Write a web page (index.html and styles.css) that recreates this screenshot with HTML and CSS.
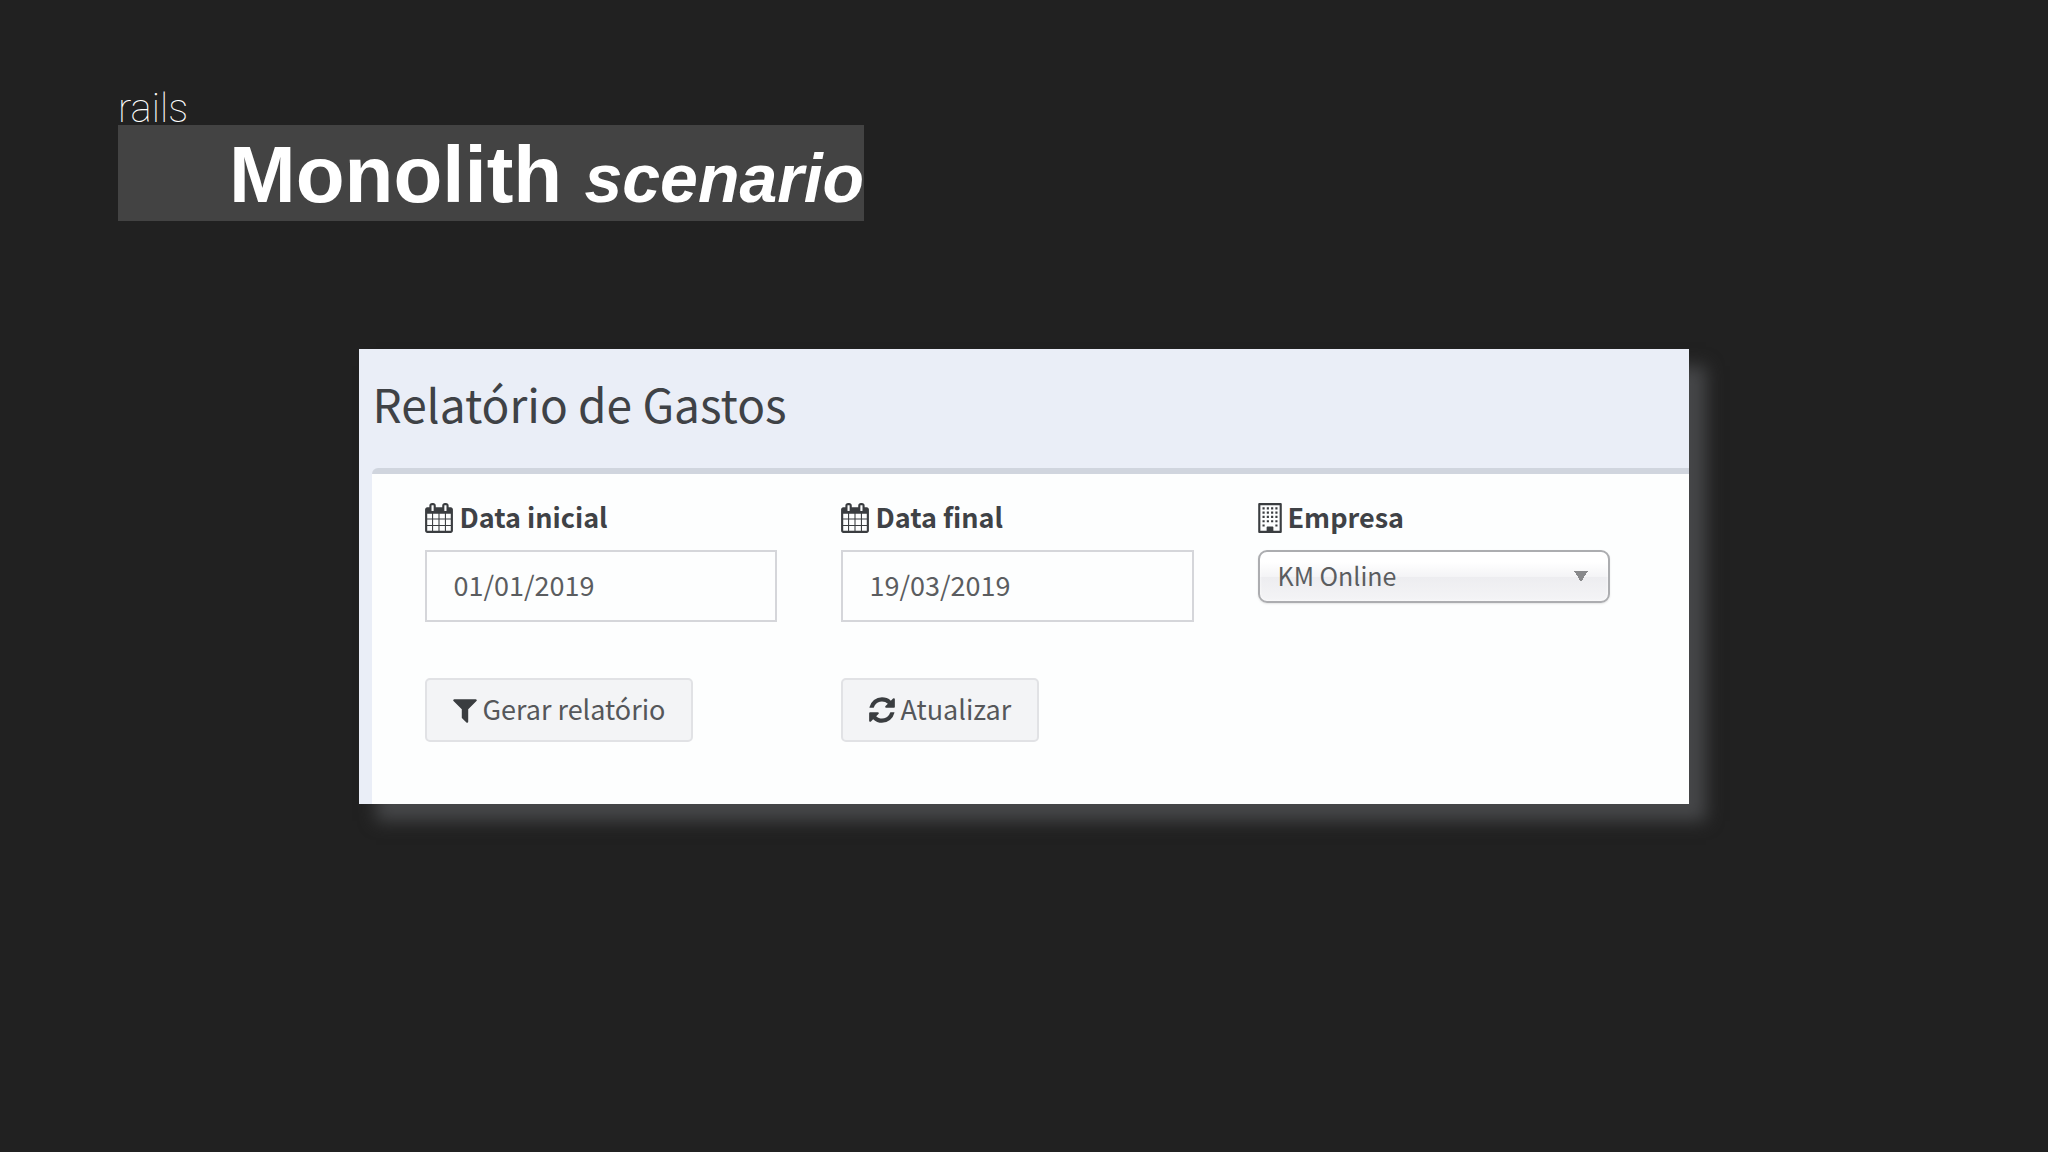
FILE: index.html
```html
<!DOCTYPE html>
<html lang="pt-BR">
<head>
<meta charset="utf-8">
<meta name="viewport" content="width=device-width, initial-scale=1">
<title>Monolith scenario</title>
<link rel="stylesheet" href="styles.css">
</head>
<body>
<svg class="sprite" aria-hidden="true">
  <symbol id="calendar" viewBox="64 0 1664 1792"><path d="M192 1664h288v-288h-288v288zm352 0h320v-288h-320v288zm-352-352h288v-320h-288v320zm352 0h320v-320h-320v320zm-352-384h288v-288h-288v288zm736 736h320v-288h-320v288zm-384-736h320v-288h-320v288zm768 736h288v-288h-288v288zm-384-352h320v-320h-320v320zm-352-864v-288q0-13-9.500-22.500t-22.500-9.500h-64q-13 0-22.500 9.500t-9.500 22.500v288q0 13 9.500 22.500t22.500 9.500h64q13 0 22.500-9.500t9.500-22.500zm736 864h288v-320h-288v320zm-384-384h320v-288h-320v288zm384 0h288v-288h-288v288zm32-480v-288q0-13-9.500-22.500t-22.500-9.500h-64q-13 0-22.500 9.500t-9.500 22.500v288q0 13 9.500 22.500t22.500 9.500h64q13 0 22.500-9.500t9.500-22.500zm384-64v1280q0 52-38 90t-90 38h-1408q-52 0-90-38t-38-90v-1280q0-52 38-90t90-38h128v-96q0-66 47-113t113-47h64q66 0 113 47t47 113v96h384v-96q0-66 47-113t113-47h64q66 0 113 47t47 113v96h128q52 0 90 38t38 90z"/></symbol>
  <symbol id="building" viewBox="0 0 1408 1792"><path fill-rule="evenodd" d="M64 0h1280q64 0 64 64v1664q0 64-64 64H64q-64 0-64-64V64Q0 0 64 0zM128 128v1536h384v-224q0-32 32-32h320q32 0 32 32v224h384V128z"/><path d="M256 256h128v128H256zM512 256h128v128H512zM768 256h128v128H768zM1024 256h128v128h-128zM256 512h128v128H256zM512 512h128v128H512zM768 512h128v128H768zM1024 512h128v128h-128zM256 768h128v128H256zM512 768h128v128H512zM768 768h128v128H768zM1024 768h128v128h-128zM256 1024h128v128H256zM512 1024h128v128H512zM768 1024h128v128H768zM1024 1024h128v128h-128zM256 1280h128v128H256zM1024 1280h128v128h-128zM512 1440h384v288H512z"/></symbol>
  <symbol id="filter" viewBox="192 0 1408 1792"><path d="M1595 295q17 41-14 70l-493 493v742q0 42-39 59-13 5-25 5-27 0-45-19l-256-256q-19-19-19-45v-486l-493-493q-31-29-14-70 17-39 59-39h1280q42 0 59 39z"/></symbol>
  <symbol id="refresh" viewBox="128 0 1536 1792"><path d="M1639 1056q0 5-1 7-64 268-268 434.500t-478 166.500q-146 0-282.500-55t-243.500-157l-129 129q-19 19-45 19t-45-19-19-45v-448q0-26 19-45t45-19h448q26 0 45 19t19 45-19 45l-137 137q71 66 161 102t187 36q134 0 250-65t186-179q11-17 53-117 8-23 30-23h192q13 0 22.500 9.500t9.500 22.500zm25-800v448q0 26-19 45t-45 19h-448q-26 0-45-19t-19-45 19-45l138-138q-148-137-349-137-134 0-250 65t-186 179q-11 17-53 117-8 23-30 23h-199q-13 0-22.500-9.500t-9.500-22.500v-7q65-268 270-434.500t480-166.500q146 0 284 55.500t245 156.500l130-129q19-19 45-19t45 19 19 45z"/></symbol>
</svg>

<header class="slide-header">
  <p class="kicker">rails</p>
  <h1 class="slide-title">Monolith <em class="slide-title-sub">scenario</em></h1>
</header>

<main class="report">
  <h2 class="report-title">Relatório de Gastos</h2>
  <form class="report-form">
    <div class="field">
      <label class="label" for="start"><svg class="icon icon-calendar" aria-hidden="true"><use href="#calendar"/></svg><span class="text">Data inicial</span></label>
      <input class="input" id="start" type="text" value="01/01/2019">
    </div>
    <div class="field">
      <label class="label" for="end"><svg class="icon icon-calendar" aria-hidden="true"><use href="#calendar"/></svg><span class="text">Data final</span></label>
      <input class="input" id="end" type="text" value="19/03/2019">
    </div>
    <div class="field">
      <label class="label" for="company"><svg class="icon icon-narrow" aria-hidden="true"><use href="#building"/></svg><span class="text">Empresa</span></label>
      <select class="select" id="company"><option>KM Online</option></select>
    </div>
    <button class="button" type="submit"><svg class="icon icon-narrow" aria-hidden="true"><use href="#filter"/></svg><span class="text">Gerar relatório</span></button>
    <button class="button" type="button"><svg class="icon icon-refresh" aria-hidden="true"><use href="#refresh"/></svg><span class="text">Atualizar</span></button>
  </form>
</main>
</body>
</html>
```

FILE: styles.css
```css
* {
  box-sizing: border-box;
}

body {
  margin: 0;
  min-height: 100vh;
  padding: 90px 0;
  background: #212121;
  color: #fff;
  font-family: "Noto Sans CJK SC", "Open Sans", sans-serif;
}

.sprite {
  display: none;
}

.slide-header {
  display: flex;
  flex-direction: column;
  align-items: flex-start;
  padding: 0 118px;
}

.kicker {
  height: 35px;
  margin: 0;
  font: 100 40px/37px Roboto, sans-serif;
}

.slide-title {
  margin: 0;
  padding: 4px 0 0 111px;
  background: #434343;
  font: bold 80px/92px "Liberation Sans", Arial, sans-serif;
}

.slide-title-sub {
  font-size: 68px;
  line-height: 68px;
}

.report {
  width: 64.9%;
  margin: 128px auto 0;
  padding-left: 13px;
  background: #eaeef7;
  box-shadow: 17px 17px 16px #464749;
  color: #3f4246;
}

.report-title {
  margin: 0;
  padding: 24px 0 35px;
  font-size: 46px;
  font-weight: 400;
  line-height: 60px;
}

.report-form {
  display: grid;
  grid-template-columns: repeat(3, 1fr);
  gap: 56px 64px;
  align-items: start;
  justify-items: start;
  padding: 26px 79px 62px 53px;
  border-top: 6px solid #d0d5de;
  border-top-left-radius: 6px;
  background: #fdfefe;
}

.field {
  width: 100%;
}

.label {
  display: flex;
  align-items: center;
  gap: 6px;
  height: 36px;
  margin-bottom: 14px;
  font-size: 27px;
  font-weight: 700;
}

.text {
  padding-bottom: 3px;
}

.icon {
  flex: none;
  height: 30px;
  fill: #3a3d40;
}

.icon-calendar {
  width: 28px;
}

.icon-narrow {
  width: 24px;
}

.icon-refresh {
  width: 26px;
}

.input,
.select {
  display: block;
  width: 100%;
  color: #5b5d60;
  font: inherit;
}

.input {
  height: 72px;
  padding: 0 26px 4px;
  border: 2px solid #d5d6da;
  background: #fdfefe;
  font-size: 27px;
}

.select {
  height: 53px;
  padding: 0 18px 4px;
  appearance: none;
  border: 2px solid #acadb0;
  border-radius: 9px;
  background:
    conic-gradient(from -32deg at 50% 100%, #88898b 64deg, transparent 0) right 20px center / 14px 11px no-repeat,
    linear-gradient(#fff 20%, #f4f4f6 50%, #ededf0 52%, #f4f4f6);
  box-shadow: 0 1px 2px #0000001a, inset 0 0 3px #fff;
  font-size: 25px;
}

.button {
  display: flex;
  align-items: center;
  gap: 5px;
  height: 64px;
  padding: 0 26px;
  border: 2px solid #e1e2e5;
  border-radius: 5px;
  background: #f3f4f6;
  color: #55575a;
  font: inherit;
  font-size: 27px;
}
```
